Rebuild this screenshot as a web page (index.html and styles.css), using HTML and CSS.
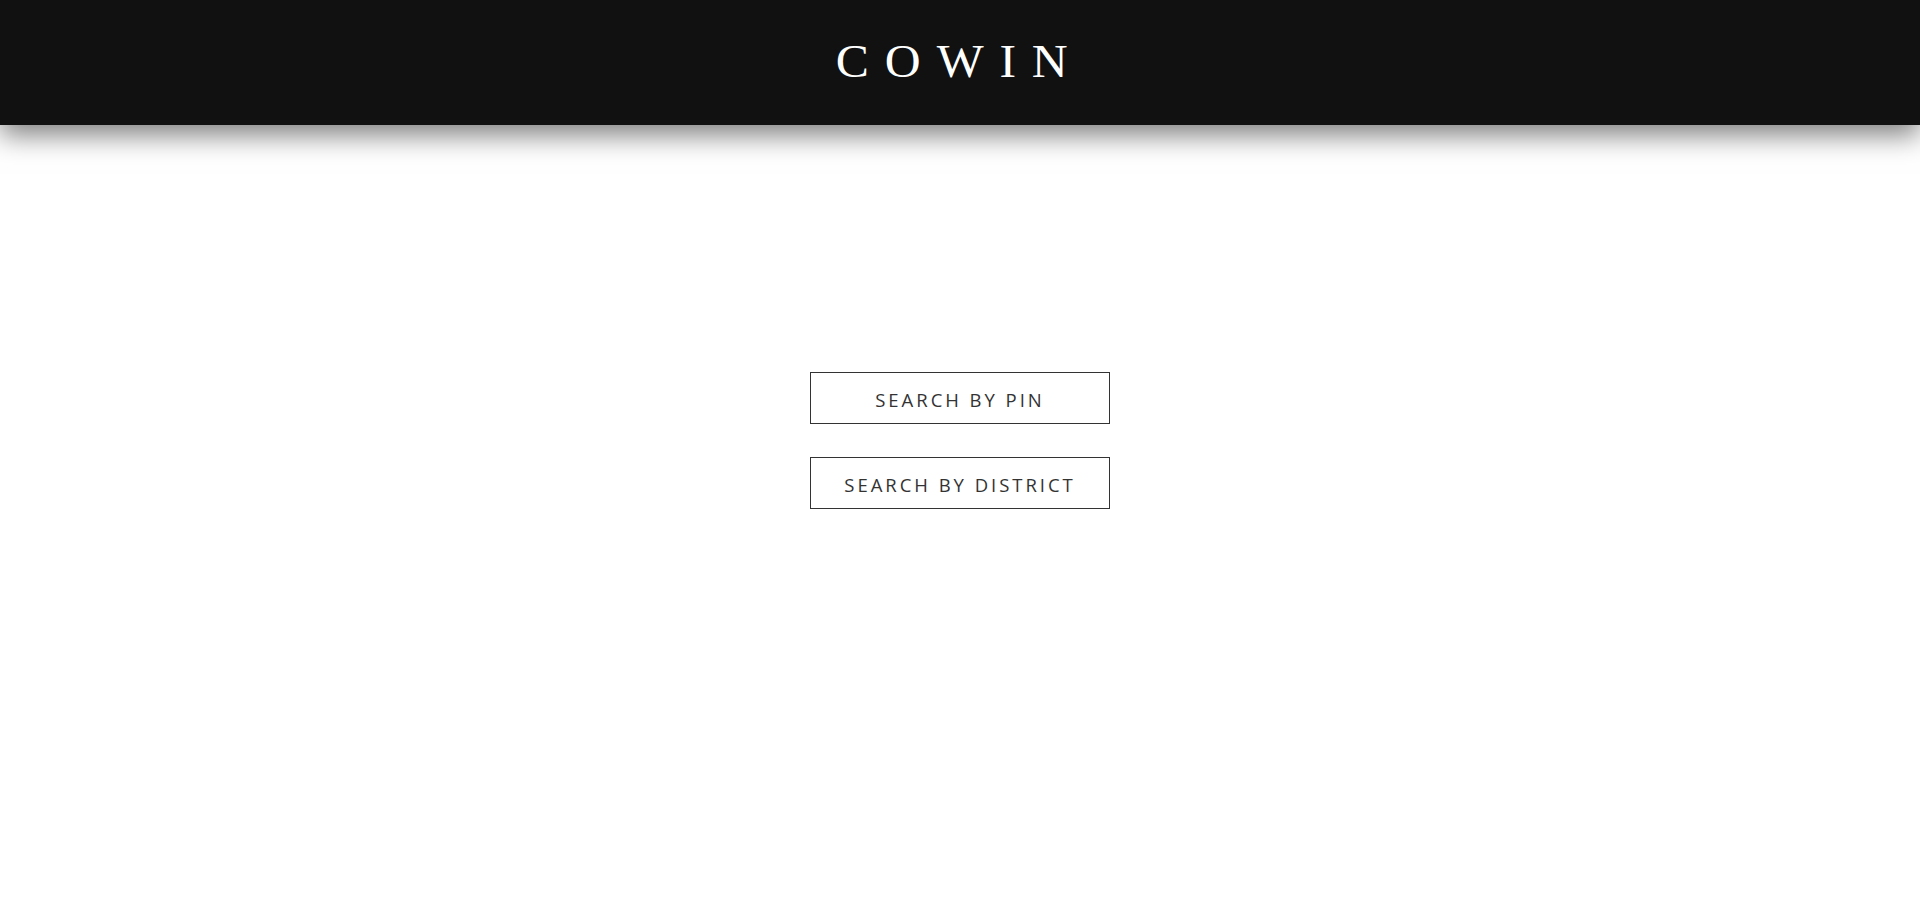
FILE: index.html
```html
<!DOCTYPE html>
<html>
<head>
<meta charset="utf-8">
<link rel="stylesheet" href="styles.css">
</head>
<body>
<header class="topbar">
  <h1 class="brand">COWIN</h1>
</header>
<main class="content">
  <button class="search-btn">SEARCH BY PIN</button>
  <button class="search-btn">SEARCH BY DISTRICT</button>
</main>
</body>
</html>
```
FILE: styles.css
```css
html, body {
  margin: 0;
  padding: 0;
  background: #fff;
}
.topbar {
  height: 125px;
  background: #111;
  display: flex;
  align-items: center;
  justify-content: center;
  box-shadow: 0 10px 26px rgba(0, 0, 0, 0.5);
  position: relative;
}
.brand {
  margin: 0;
  color: #fff;
  font-family: "Liberation Serif", serif;
  font-weight: 400;
  font-size: 46px;
  letter-spacing: 0.32em;
  transform: scaleX(1.08);
  padding-bottom: 2px;
}
.content {
  display: flex;
  flex-direction: column;
  align-items: center;
  padding-top: 247px;
  gap: 33px;
}
.search-btn {
  width: 300px;
  height: 52px;
  background: #fff;
  border: 1px solid #333;
  color: #333;
  font-family: "Open Sans", sans-serif;
  font-size: 18.5px;
  letter-spacing: 0.16em;
  padding: 2px 0 0;
}
```
